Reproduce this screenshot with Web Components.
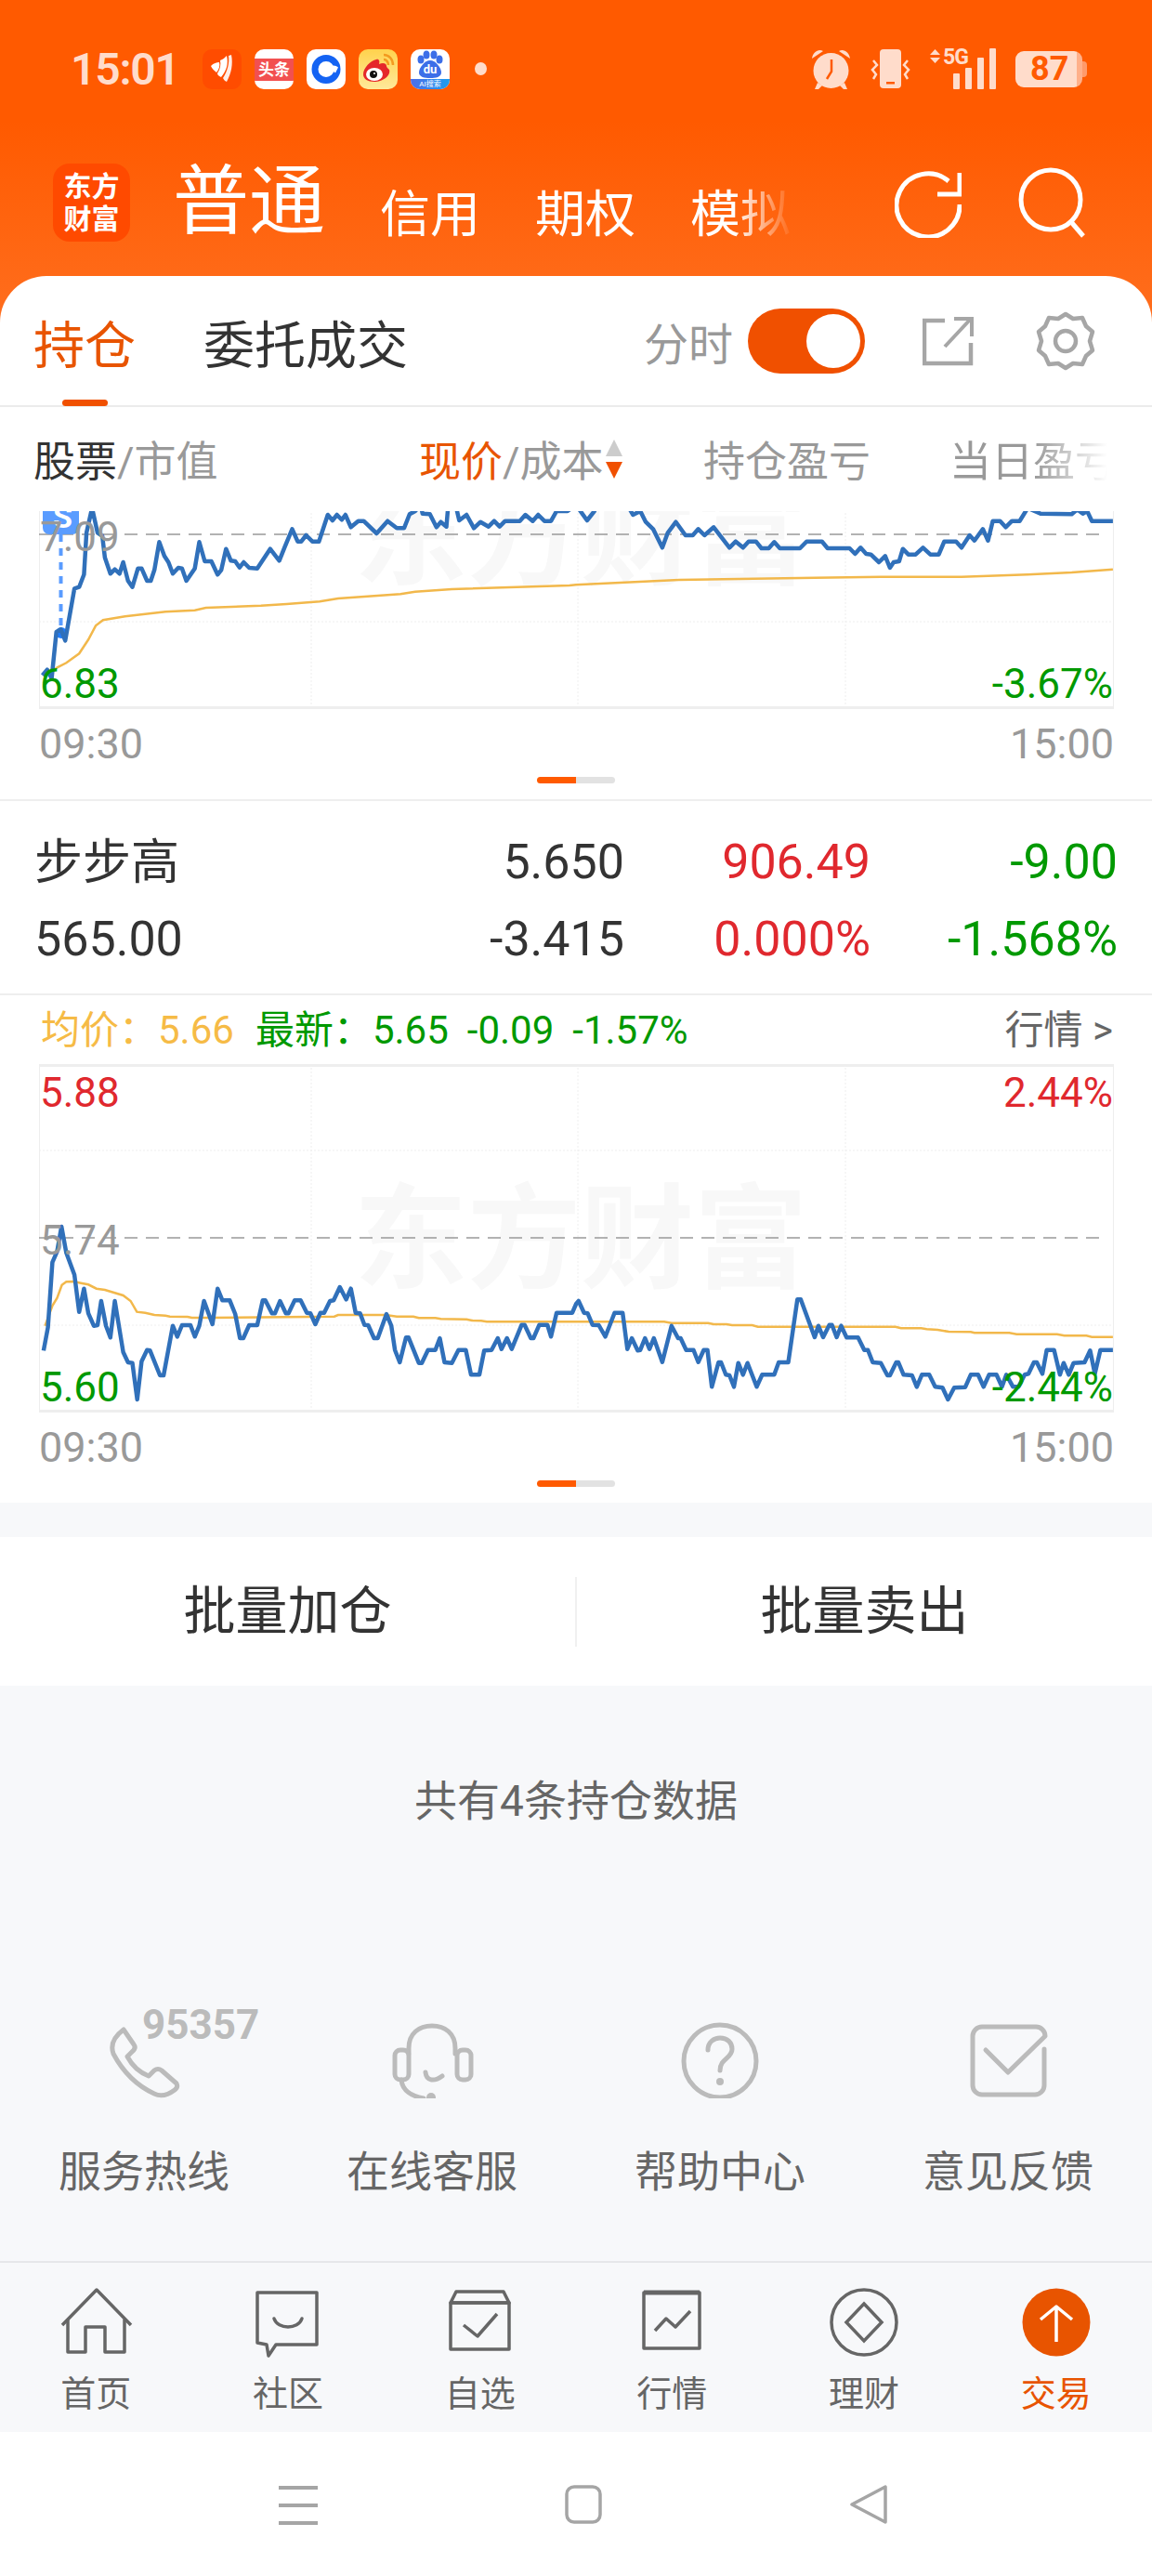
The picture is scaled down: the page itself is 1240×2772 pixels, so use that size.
<!DOCTYPE html>
<html lang="zh">
<head>
<meta charset="utf-8">
<title>持仓</title>
<style>
   html, body { margin: 0; padding: 0; background: #fff; }
   body { width: 1240px; height: 2772px; overflow: hidden; font-family: Roboto, "Noto Sans CJK SC", sans-serif; }
</style>
</head>
<body>
<app-header>
   <svg slot="apps" width="42" height="43" viewBox="0 0 42 43"><rect width="42" height="43" rx="10" fill="#ff4c00"/><path d="M9 18c3-3 6-4 9-4 1 4 0 7-3 11-2-2-5-4-6-7z" fill="#fff"/><path d="M19 12c3-1 5-3 7-5 2 8 0 16-6 23-3-1-4-3-4-4 3-5 4-9 3-14z" fill="#fff"/><path d="M28 7l3-1c2 10 0 20-5 29-2-1-3-2-4-4 5-8 7-16 6-24z" fill="#fff" opacity=".9"/></svg>
   <status-toutiao slot="apps"></status-toutiao>
   <svg slot="apps" width="42" height="43" viewBox="0 0 42 43"><rect width="42" height="43" rx="10" fill="#fff"/><circle cx="21" cy="21.500" r="12" fill="none" stroke="#1463f3" stroke-width="7"/><path d="M21 21.500c4-5 10-5 13-2l-3 6c-3-3-7-2-10-4z" fill="#fff"/></svg>
   <svg slot="apps" width="42" height="43" viewBox="0 0 42 43"><defs><linearGradient id="wb" x1="0" y1="0" x2="0" y2="1"><stop offset="0" stop-color="#ffd24d"/><stop offset="1" stop-color="#ffe99a"/></linearGradient></defs><rect width="42" height="43" rx="10" fill="url(#wb)"/><path d="M5 27c0-7 8-15 14-16 3-1 4 2 3 5 4-2 8-1 8 2 0 1 1 2 3 4 2 7-8 13-16 13-7 0-12-3-12-8z" fill="#e5262a"/><ellipse cx="17" cy="27" rx="9" ry="7" fill="#fff"/><circle cx="16" cy="27" r="4" fill="#111"/><circle cx="17" cy="26" r="1" fill="#fff"/><path d="M27 6c6 0 10 5 10 11M27 11c3 0 5 3 5 6" fill="none" stroke="#f39a1f" stroke-width="2.500"/></svg>
   <status-baidu slot="apps"></status-baidu>
</app-header>

<main-sheet>
   <trade-tabs></trade-tabs>
   <col-header></col-header>

   <stock-chart set="a" clip="162" left="7.09" low="6.83" lowright="-3.67%"></stock-chart>
   <time-axis></time-axis>

   <position-row name="步步高" price="5.650" profit="906.49" day="-9.00" value="565.00" cost="-3.415" ratio="0.000%" dayratio="-1.568%"></position-row>
   <quote-info></quote-info>

   <stock-chart set="b" clip="0" top="5.88" topright="2.44%" left="5.74" low="5.60" lowright="-2.44%"></stock-chart>
   <time-axis></time-axis>
</main-sheet>

<batch-actions></batch-actions>

<service-panel>
   <service-item label="服务热线">
      <svg width="110" height="90" viewBox="0 0 110 90" fill="none" stroke="#bbb" stroke-width="5" stroke-linejoin="round"><path d="M33 16L44 32Q47 36 42 40L37 45Q45 60 60 66L66 60Q70 57 74 60L90 74Q92 78 88 81Q76 90 66 85Q38 72 22 42Q17 28 33 16Z"/></svg>
      <span slot="badge">95357</span>
   </service-item>
   <service-item label="在线客服">
      <svg width="110" height="90" viewBox="0 0 110 90" fill="none" stroke="#bbb" stroke-width="5" stroke-linecap="round"><path d="M30 42V36C30 20 41 12 55 12S80 20 80 36V42"/><rect x="15" y="38" width="15" height="32" rx="6"/><rect x="82" y="38" width="15" height="32" rx="6"/><path d="M22 70C23 82 34 88 46 90"/><path d="M48 62C49 72 58 72 66 66"/><circle cx="54" cy="89" r="5" fill="#bbb" stroke="none"/></svg>
   </service-item>
   <service-item label="帮助中心">
      <svg width="110" height="90" viewBox="0 0 110 90" fill="none" stroke="#bbb" stroke-width="5" stroke-linecap="round"><circle cx="55" cy="50" r="39"/><path d="M42 38C42 29 49 25 55 25C63 25 68 30 68 37C68 47 55 47 55 60"/><circle cx="55" cy="72" r="4" fill="#bbb" stroke="none"/></svg>
   </service-item>
   <service-item label="意见反馈">
      <svg width="110" height="90" viewBox="0 0 110 90" fill="none" stroke="#bbb" stroke-width="5" stroke-linecap="round" stroke-linejoin="round"><path d="M94 37V76A10 10 0 0 1 84 86H27A10 10 0 0 1 17 76V23A10 10 0 0 1 27 13H84A10 10 0 0 1 95 23L55 62L31 38"/></svg>
   </service-item>
</service-panel>

<tab-bar>
   <tab-item label="首页">
      <svg width="90" height="80" viewBox="0 0 90 80" fill="none" stroke="#666" stroke-width="3.500" stroke-linejoin="round"><path d="M9 41L46 3L83 41"/><path d="M15 35V70H34V43H55V70H76V35"/></svg>
   </tab-item>
   <tab-item label="社区">
      <svg width="90" height="80" viewBox="0 0 90 80" fill="none" stroke="#666" stroke-width="3.500" stroke-linejoin="round" stroke-linecap="round"><path d="M12 6H76V62H32L24 74L22 62L12 60Z"/><path d="M30 34C34 46 56 46 60 34"/></svg>
   </tab-item>
   <tab-item label="自选">
      <svg width="90" height="80" viewBox="0 0 90 80" fill="none" stroke="#666" stroke-width="3.500" stroke-linejoin="round"><path d="M13 17L19 5H70L76 17Z"/><rect x="13" y="17" width="63" height="50"/><path d="M27 41L42 53L63 29"/></svg>
   </tab-item>
   <tab-item label="行情">
      <svg width="90" height="80" viewBox="0 0 90 80" fill="none" stroke="#666" stroke-width="3.500" stroke-linejoin="round"><rect x="15" y="6" width="60" height="60"/><path d="M15 6H75" stroke-width="5"/><path d="M27 47L39 34L49 43L65 26"/></svg>
   </tab-item>
   <tab-item label="理财">
      <svg width="90" height="80" viewBox="0 0 90 80" fill="none" stroke="#666" stroke-width="3.500"><circle cx="45" cy="38" r="35"/><path d="M45 18L64 38L45 58L26 38Z"/></svg>
   </tab-item>
   <tab-item label="交易" active>
      <svg width="90" height="80" viewBox="0 0 90 80" fill="none" stroke="#fff" stroke-width="3.500" stroke-linejoin="round"><circle cx="45" cy="38" r="36.500" fill="#e85400" stroke="none"/><path d="M45 21V59M28 35L45 21L62 35"/></svg>
   </tab-item>
</tab-bar>

<android-nav></android-nav>

<script>
const CJK = 'Roboto, "Noto Sans CJK SC", sans-serif';

// raw samples read off the screenshot, as [x, y] in crop space
const SHAPES = {
   a: {
      blueLeft: [[65,590],[78,572],[90,600],[103,450],[115,442],[127,478],[152,310],[165,305],[178,265],[185,130],[200,50],[215,130],[228,140],[235,210],[250,262],[262,248],[275,262],[285,225],[298,285],[310,305],[325,245],[335,245],[350,285],[360,285],[370,250],[383,160],[397,205],[408,225],[420,262],[435,243],[445,245],[457,285],[480,245],[492,160],[507,222],[525,222],[542,265],[552,250],[565,182],[578,220],[590,222],[602,242],[613,225],[628,243],[650,245],[685,182],[710,220],[725,175],[745,118],[760,158],[770,158],[783,138],[800,158],[818,158],[842,72],[855,90],[867,72],[880,88],[890,72],[905,112],[925,92],[940,92],[975,132],[1005,92],[1030,115],[1050,115],[1065,70],[1080,60],[1095,40],[1100,68],[1120,70],[1138,112],[1150,95],[1165,110],[1170,40],[1190,40],[1200,90],[1220,72],[1240,115],[1258,95],[1280,110],[1295,92],[1310,110],[1325,92],[1365,92],[1380,72],[1400,92],[1415,72],[1432,92],[1450,92],[1465,60],[1495,60],[1518,40]],
      blueRight: [[30,90],[50,60],[60,30],[135,30],[155,72],[175,60],[190,95],[210,118],[235,178],[250,130],[272,95],[298,138],[318,138],[333,118],[350,138],[375,112],[418,178],[435,158],[455,178],[470,158],[490,158],[505,180],[525,180],[540,160],[555,180],[610,180],[628,158],[670,158],[685,180],[745,180],[760,198],[775,178],[790,198],[803,200],[825,225],[842,205],[855,243],[865,225],[880,222],[890,182],[905,200],[925,200],[945,178],[965,200],[988,200],[1003,158],[1035,158],[1050,178],[1072,138],[1085,155],[1108,118],[1122,155],[1135,92],[1155,92],[1170,112],[1187,92],[1208,92],[1230,50],[1265,68],[1350,70],[1365,55],[1380,68],[1392,60],[1405,92],[1462,92]],
      goldLeft: [[80,590],[105,565],[130,550],[165,520],[190,475],[210,430],[230,412],[290,400],[400,385],[480,380],[510,372],[660,365],[730,360],[820,352],[870,342],[1040,328],[1080,320],[1180,312],[1500,300]],
      goldRight: [[0,298],[280,282],[650,275],[830,272],[1050,272],[1230,265],[1350,258],[1462,248]],
      baseY: 530
   },
   b: {
      blueLeft: [[68,580],[80,505],[92,295],[105,260],[117,180],[130,265],[152,335],[165,455],[178,380],[190,460],[205,500],[215,498],[225,420],[238,500],[250,538],[262,420],[285,585],[298,618],[310,620],[323,738],[335,615],[350,578],[358,580],[385,660],[395,660],[420,500],[432,535],[445,498],[468,498],[480,535],[492,500],[505,420],[528,495],[542,380],[555,418],[575,418],[590,462],[603,540],[612,540],[628,498],[650,498],[665,418],[672,418],[690,460],[698,460],[712,420],[728,460],[735,460],[752,418],[768,418],[785,458],[795,460],[808,495],[822,458],[832,458],[848,420],[858,418],[875,375],[892,415],[905,380],[918,458],[930,460],[942,497],[952,498],[968,540],[978,540],[1002,462],[1015,500],[1025,578],[1038,618],[1055,538],[1062,538],[1090,620],[1098,620],[1115,578],[1135,578],[1147,540],[1160,618],[1180,620],[1198,578],[1218,578],[1232,658],[1255,658],[1268,580],[1288,578],[1305,540],[1315,575],[1330,540],[1343,575],[1370,497],[1378,497],[1395,540],[1402,540],[1418,497],[1440,497],[1450,535],[1465,458],[1508,458],[1518,430]],
      blueRight: [[7,420],[22,458],[32,460],[45,497],[62,498],[80,535],[105,458],[127,458],[140,575],[152,540],[168,580],[175,578],[188,540],[200,575],[212,540],[235,617],[260,500],[278,540],[285,540],[300,578],[320,578],[333,617],[348,578],[358,578],[370,697],[388,618],[395,618],[408,658],[418,660],[430,697],[442,620],[455,658],[467,620],[492,697],[507,658],[540,658],[552,618],[578,618],[603,415],[612,415],[650,537],[660,500],[673,537],[690,497],[697,497],[710,537],[722,500],[737,538],[768,538],[785,578],[795,578],[808,618],[830,620],[848,660],[855,660],[872,618],[878,618],[892,658],[915,660],[928,697],[942,658],[962,658],[978,697],[998,700],[1013,738],[1030,700],[1060,698],[1075,658],[1095,658],[1110,697],[1125,658],[1145,658],[1160,697],[1172,658],[1190,697],[1205,697],[1222,658],[1232,655],[1247,618],[1255,618],[1270,655],[1282,578],[1302,578],[1318,658],[1328,620],[1342,658],[1355,620],[1385,618],[1400,580],[1413,655],[1428,578],[1462,578]],
      goldLeft: [[72,500],[92,435],[105,410],[118,368],[130,358],[150,357],[170,362],[190,367],[212,380],[235,384],[285,402],[305,420],[322,455],[345,458],[370,465],[400,467],[412,470],[460,471],[472,474],[520,474],[860,470],[870,465],[1000,465],[1030,470],[1075,470],[1090,475],[1135,475],[1150,478],[1220,479],[1235,483],[1260,484],[1275,487],[1518,487]],
      goldRight: [[0,487],[240,487],[260,491],[360,491],[375,495],[410,495],[425,498],[480,498],[495,503],[870,503],[885,508],[940,508],[955,511],[985,513],[1015,519],[1075,520],[1085,523],[1180,523],[1200,527],[1310,527],[1330,532],[1390,532],[1405,536],[1462,536]],
      baseY: 1260
   }
};

// chart box sits at page x 42; a full plot is 375 tall
function toPoints(set, leftKey, rightKey, plotTop) {
   const s = SHAPES[set];
   const conv = (list, baseX) => list.map(([x, y]) =>
      (baseX + x / 2.53 - 42).toFixed(1) + ',' + (s.baseY + y / 3 - plotTop).toFixed(1));
   return conv(s[leftKey], 20).concat(conv(s[rightKey], 620)).join(' ');
}

class AppHeader extends HTMLElement {
   constructor() {
      super();
      this.attachShadow({mode: 'open'});
   }
   connectedCallback() {
      this.shadowRoot.innerHTML = `
         <style>
            :host { display: block; height: 347px; background: linear-gradient(#ff5a00 0, #ff5a00 130px, #ff6e1e 347px); font-family: ${CJK}; color: #fff; }
            .status { height: 150px; display: flex; align-items: center; padding: 0 70px 2px 76px; box-sizing: border-box; color: #ffdccb; }
            .time { width: 142px; font-size: 48px; font-weight: 600; letter-spacing: -1.200px; }
            .apps { display: flex; gap: 14px; align-items: center; }
            .apps ::slotted(*) { display: block; }
            .dot { width: 13px; height: 14px; border-radius: 50%; background: #ffdccb; margin-left: 27px; }
            .sys { margin-left: auto; display: flex; gap: 21px; align-items: center; }
            .sys svg { display: block; }
            .net { position: relative; width: 71px; height: 44px; }
            .net span { position: absolute; left: 14px; top: -3px; font-size: 23px; font-weight: 700; line-height: 26px; letter-spacing: -1px; }
            .bat { display: flex; align-items: center; }
            .cell { width: 72px; height: 39px; border-radius: 9px; box-sizing: border-box; background: linear-gradient(90deg, #ffdccb 92%, #ffb08a 92%); color: #ff5a00; font-size: 36px; font-weight: 700; line-height: 39px; padding-left: 16px; }
            .tip { width: 5px; height: 17px; background: #ff9a6a; border-radius: 0 4px 4px 0; }
            .nav { display: flex; align-items: flex-start; padding: 26px 72px 0 57px; }
            .logo { width: 83px; height: 84px; border-radius: 18px; background: #ff4a00; font-size: 30px; font-weight: 700; line-height: 35px; text-align: center; padding-top: 7px; box-sizing: border-box; flex: none; }
            .strip { margin-left: 46px; width: 668px; display: flex; align-items: flex-end; gap: 59px; white-space: nowrap; -webkit-mask-image: linear-gradient(90deg, #000 604px, transparent 668px); mask-image: linear-gradient(90deg, #000 604px, transparent 668px); margin-top: -15px; }
            .strip b { font-weight: 400; font-size: 82px; line-height: 112px; }
            .strip span { font-size: 54px; line-height: 82px; }
            .tools { margin-left: auto; margin-top: 4px; display: flex; gap: 61px; }
            .tools svg { display: block; }
         </style>
         <div class="status">
            <div class="time">15:01</div>
            <div class="apps"><slot name="apps"></slot></div>
            <div class="dot"></div>
            <div class="sys">
               <svg width="43" height="44" viewBox="0 0 43 44" fill="#ffdccb"><circle cx="21.500" cy="24" r="19"/><path d="M1 11C2 4 8 0 13 3ZM42 11C41 4 35 0 30 3ZM7 37L4 44H8L12 40ZM36 37L39 44H35L31 40Z"/><path d="M22 12V25L17 33" fill="none" stroke="#ff5a00" stroke-width="2.500"/></svg>
               <svg width="43" height="42" viewBox="0 0 43 42" fill="#ffdccb"><rect x="10" y="0" width="23" height="42" rx="4"/><rect x="17" y="35" width="9" height="2.500" fill="#ff5a00"/><path d="M3 12L7 17L2 22L6 27L3 32M40 12L36 17L41 22L37 27L40 32" fill="none" stroke="#ffdccb" stroke-width="2.500"/></svg>
               <div class="net">
                  <svg width="71" height="44" viewBox="0 0 71 44" fill="#ffdccb"><path d="M5.500 1L0 7H11ZM0 10H11L5.500 16Z"/><rect x="25" y="27" width="7" height="17" rx="1"/><rect x="38" y="21" width="7" height="23" rx="1"/><rect x="51" y="10" width="7" height="34" rx="1"/><rect x="64" y="0" width="7" height="44" rx="1"/></svg>
                  <span>5G</span>
               </div>
               <div class="bat"><div class="cell">87</div><div class="tip"></div></div>
            </div>
         </div>
         <div class="nav">
            <div class="logo">东方<br>财富</div>
            <div class="strip"><b>普通</b><span>信用</span><span>期权</span><span>模拟</span></div>
            <div class="tools">
               <svg width="72" height="76" viewBox="0 0 72 76" fill="none" stroke="#fff" stroke-width="5"><path d="M58 15A34 34 0 1 0 70 40"/><path d="M70 6V29H46"/></svg>
               <svg width="72" height="76" viewBox="0 0 72 76" fill="none" stroke="#fff" stroke-width="5"><circle cx="35" cy="35" r="32"/><path d="M58 60L70 74"/></svg>
            </div>
         </div>
      `;
   }
}
customElements.define('app-header', AppHeader);

class StatusToutiao extends HTMLElement {
   constructor() {
      super();
      this.attachShadow({mode: 'open'});
   }
   connectedCallback() {
      this.shadowRoot.innerHTML = `
         <style>
            :host { display: block; width: 42px; height: 43px; background: #fff; border-radius: 10px; overflow: hidden; font-family: ${CJK}; }
            div { margin-top: 10px; height: 24px; background: #f25050; color: #fff; font-size: 17px; font-weight: 700; line-height: 24px; text-align: center; white-space: nowrap; }
         </style>
         <div>头条</div>
      `;
   }
}
customElements.define('status-toutiao', StatusToutiao);

class StatusBaidu extends HTMLElement {
   constructor() {
      super();
      this.attachShadow({mode: 'open'});
   }
   connectedCallback() {
      this.shadowRoot.innerHTML = `
         <style>
            :host { display: block; position: relative; width: 42px; height: 43px; background: #fff; border-radius: 10px; overflow: hidden; font-family: ${CJK}; }
            svg { display: block; }
            .du { position: absolute; left: 0; right: 0; top: 14px; text-align: center; font-size: 13px; font-weight: 700; color: #fff; line-height: 15px; }
            .band { position: absolute; left: 0; right: 0; bottom: 0; height: 11px; background: linear-gradient(90deg, #4f6de8, #1b9df0); color: #fff; font-size: 8px; line-height: 11px; text-align: center; white-space: nowrap; }
         </style>
         <svg width="42" height="43" viewBox="0 0 42 43" fill="#3c6ee8"><ellipse cx="11" cy="11" rx="3.500" ry="4.500"/><ellipse cx="17" cy="6" rx="3.500" ry="4.500"/><ellipse cx="25" cy="6" rx="3.500" ry="4.500"/><ellipse cx="31" cy="11" rx="3.500" ry="4.500"/><path d="M21 12C27 12 33 20 33 25C33 30 27 31 21 31S9 30 9 25C9 20 15 12 21 12Z"/></svg>
         <div class="du">du</div>
         <div class="band">AI搜索</div>
      `;
   }
}
customElements.define('status-baidu', StatusBaidu);

class MainSheet extends HTMLElement {
   constructor() {
      super();
      this.attachShadow({mode: 'open'});
   }
   connectedCallback() {
      this.shadowRoot.innerHTML = `
         <style>
            :host { display: block; position: relative; margin-top: -50px; height: 1320px; background: #fff; border-radius: 50px 50px 0 0; overflow: hidden; font-family: ${CJK}; }
         </style>
         <slot></slot>
      `;
   }
}
customElements.define('main-sheet', MainSheet);

class TradeTabs extends HTMLElement {
   constructor() {
      super();
      this.attachShadow({mode: 'open'});
   }
   connectedCallback() {
      this.shadowRoot.innerHTML = `
         <style>
            :host { display: flex; position: relative; align-items: center; height: 141px; box-sizing: border-box; border-bottom: 2px solid #ebebeb; padding: 0 61px 0 36px; font-size: 55px; color: #333; }
            .on { color: #e85400; }
            .two { margin-left: 73px; }
            .bar { position: absolute; left: 67px; bottom: -1px; width: 49px; height: 7px; border-radius: 4px; background: #f05000; }
            .right { margin-left: auto; display: flex; align-items: center; }
            .lbl { font-size: 48px; color: #999; }
            .sw { margin-left: 16px; width: 126px; height: 70px; border-radius: 35px; background: #f05000; position: relative; }
            .sw i { position: absolute; right: 5px; top: 6px; width: 58px; height: 58px; border-radius: 50%; background: #fff; }
            svg { display: block; }
            .share { margin-left: 62px; }
            .gear { margin-left: 66px; }
         </style>
         <span class="on">持仓</span>
         <span class="two">委托成交</span>
         <div class="bar"></div>
         <div class="right">
            <span class="lbl">分时</span>
            <div class="sw"><i></i></div>
            <svg class="share" width="56" height="56" viewBox="0 0 56 56" fill="none" stroke="#a6a6a6" stroke-width="4.500"><path d="M24 6H2V52H52V30"/><path d="M24 34L52 4M34 4H53V23" stroke-width="4"/></svg>
            <svg class="gear" width="64" height="64" viewBox="0 0 64 64" fill="none" stroke="#a6a6a6" stroke-width="4.500" stroke-linejoin="round"><path d="M32 3L40 8L50 7L54 16L61 22L58 32L61 42L54 48L50 57L40 56L32 61L24 56L14 57L10 48L3 42L6 32L3 22L10 16L14 7L24 8Z"/><circle cx="32" cy="32" r="11"/></svg>
         </div>
      `;
   }
}
customElements.define('trade-tabs', TradeTabs);

class ColHeader extends HTMLElement {
   constructor() {
      super();
      this.attachShadow({mode: 'open'});
   }
   connectedCallback() {
      this.shadowRoot.innerHTML = `
         <style>
            :host { display: grid; grid-template-columns: 415px 306px 265px 1fr; align-items: center; height: 112px; padding: 0 0 1px 36px; box-sizing: border-box; font-size: 45px; color: #999; white-space: nowrap; }
            .dark { color: #333; }
            .hot { color: #e85400; }
            .sort { display: inline-flex; align-items: center; }
            .sort svg { display: block; margin-left: 1px; }
            .last { -webkit-mask-image: linear-gradient(90deg, #000 90px, transparent 170px); mask-image: linear-gradient(90deg, #000 90px, transparent 170px); }
         </style>
         <span><span class="dark">股票</span>/市值</span>
         <span class="sort"><span class="hot">现价</span>/成本<svg width="20" height="44" viewBox="0 0 20 44"><path d="M10 1L19 19H1Z" fill="#ccc"/><path d="M1 25H19L10 43Z" fill="#f05000"/></svg></span>
         <span>持仓盈亏</span>
         <span class="last">当日盈亏</span>
      `;
   }
}
customElements.define('col-header', ColHeader);

class StockChart extends HTMLElement {
   constructor() {
      super();
      this.attachShadow({mode: 'open'});
   }
   connectedCallback() {
      const clip = parseInt(this.getAttribute('clip') || '0', 10);
      const set = this.getAttribute('set');
      const plotTop = set === 'a' ? 388 : 1145;
      const blue = toPoints(set, 'blueLeft', 'blueRight', plotTop);
      const gold = toPoints(set, 'goldLeft', 'goldRight', plotTop);
      const label = (k) => this.getAttribute(k) || '';
      const marker = set === 'a' ? `
         <path d="M23.500 187V285" stroke="#5a9cff" stroke-width="4" stroke-dasharray="8 7"/>
         <circle cx="24" cy="293" r="6" fill="#1f7dff"/>
         <rect x="4" y="150" width="39" height="37" rx="7" fill="#5a9cff"/>` : '';
      this.shadowRoot.innerHTML = `
         <style>
            :host { display: block; margin: 0 41px 0 42px; height: ${375 - clip}px; overflow: hidden; }
            .plot { position: relative; width: 1157px; height: 375px; margin-top: ${-clip}px; box-sizing: border-box; border: 1px solid #eee; border-top-width: 3px; border-bottom-width: 3px; }
            .mark { position: absolute; left: 338px; top: 112px; font-family: ${CJK}; font-size: 122px; font-weight: 700; line-height: 150px; color: #f8f8f8; white-space: nowrap; }
            svg { position: absolute; left: -1px; top: -3px; }
            .s { position: absolute; left: 14px; top: ${150 - 3}px; font-size: 34px; font-weight: 700; color: #fff; line-height: 37px; }
            .labels { position: absolute; left: 0; right: 0; top: -3px; height: 375px; box-sizing: border-box; padding: 6px 0 2px; display: grid; grid-template-columns: 1fr 1fr; grid-template-rows: 50px 50px 50px; align-content: space-between; font-size: 44px; line-height: 50px; font-family: ${CJK}; }
            .labels .r { text-align: right; }
            .up { color: #e0282e; }
            .mid { color: #999; }
            .dn { color: #009900; }
         </style>
         <div class="plot">
            <div class="mark">东方财富</div>
            <svg width="1157" height="375" viewBox="0 0 1157 375" fill="none">
               <g stroke="#eee" stroke-width="1" stroke-dasharray="2 2">
                  <path d="M293 0V375M580 0V375M868 0V375M0 93H1157M0 281H1157"/>
               </g>
               <path d="M0 187H1150" stroke="#999" stroke-width="1.500" stroke-dasharray="14 9"/>
               ${marker}
               <polyline points="${gold}" stroke="#f2b84b" stroke-width="2.500"/>
               <polyline points="${blue}" stroke="#3070ba" stroke-width="4.500" stroke-linejoin="round"/>
            </svg>
            ${set === 'a' ? '<div class="s">S</div>' : ''}
            <div class="labels">
               <span class="up">${label('top')}</span><span class="up r">${label('topright')}</span>
               <span class="mid">${label('left')}</span><span></span>
               <span class="dn">${label('low')}</span><span class="dn r">${label('lowright')}</span>
            </div>
         </div>
      `;
   }
}
customElements.define('stock-chart', StockChart);

class TimeAxis extends HTMLElement {
   constructor() {
      super();
      this.attachShadow({mode: 'open'});
   }
   connectedCallback() {
      this.shadowRoot.innerHTML = `
         <style>
            :host { display: block; height: 97px; padding: 0 41px 0 42px; box-sizing: border-box; color: #999; font-size: 45px; }
            .row { display: flex; justify-content: space-between; height: 73px; line-height: 76px; }
            .pager { display: flex; justify-content: center; margin: 0 -41px 0 -42px; }
            .pager i { width: 42px; height: 7px; background: #e2e2e2; border-radius: 0 4px 4px 0; }
            .pager i:first-child { background: #ff5a00; border-radius: 4px 0 0 4px; }
         </style>
         <div class="row"><span>09:30</span><span>15:00</span></div>
         <div class="pager"><i></i><i></i></div>
      `;
   }
}
customElements.define('time-axis', TimeAxis);

class PositionRow extends HTMLElement {
   constructor() {
      super();
      this.attachShadow({mode: 'open'});
   }
   connectedCallback() {
      const a = (k) => this.getAttribute(k);
      this.shadowRoot.innerHTML = `
         <style>
            :host { display: grid; grid-template-columns: 260px 375px 265px 266px; grid-auto-rows: 83px; align-items: center; height: 211px; box-sizing: border-box; padding: 24px 0 21px 37px; border-top: 2px solid #eee; border-bottom: 2px solid #eee; font-size: 52px; color: #333; white-space: nowrap; }
            span { text-align: right; }
            .l { text-align: left; }
            .name { padding-bottom: 8px; }
            .up { color: #e0282e; }
            .dn { color: #009900; }
         </style>
         <span class="l name">${a('name')}</span><span>${a('price')}</span><span class="up">${a('profit')}</span><span class="dn">${a('day')}</span>
         <span class="l">${a('value')}</span><span>${a('cost')}</span><span class="up">${a('ratio')}</span><span class="dn">${a('dayratio')}</span>
      `;
   }
}
customElements.define('position-row', PositionRow);

class QuoteInfo extends HTMLElement {
   constructor() {
      super();
      this.attachShadow({mode: 'open'});
   }
   connectedCallback() {
      this.shadowRoot.innerHTML = `
         <style>
            :host { display: flex; align-items: baseline; height: 74px; line-height: 76px; padding: 0 42px 0 44px; box-sizing: border-box; font-size: 42px; white-space: nowrap; }
            .avg { color: #f6bb46; display: flex; align-items: baseline; }
            .now { color: #009900; display: flex; align-items: baseline; gap: 20px; margin-left: 23px; }
            .key { margin-right: -20px; }
            .more { margin-left: auto; color: #666; }
         </style>
         <span class="avg"><span>均价：</span><span>5.66</span></span>
         <span class="now"><span class="key">最新：</span><span>5.65</span><span>-0.09</span><span>-1.57%</span></span>
         <span class="more">行情 &gt;</span>
      `;
   }
}
customElements.define('quote-info', QuoteInfo);

class BatchActions extends HTMLElement {
   constructor() {
      super();
      this.attachShadow({mode: 'open'});
   }
   connectedCallback() {
      this.shadowRoot.innerHTML = `
         <style>
            :host { display: flex; align-items: center; height: 197px; box-sizing: border-box; border-top: 37px solid #f7f8fa; background: #fff; font-size: 56px; color: #333; font-family: ${CJK}; }
            span { flex: 1; text-align: center; line-height: 75px; }
            span + span { border-left: 2px solid #f0f0f0; }
         </style>
         <span>批量加仓</span><span>批量卖出</span>
      `;
   }
}
customElements.define('batch-actions', BatchActions);

class ServicePanel extends HTMLElement {
   constructor() {
      super();
      this.attachShadow({mode: 'open'});
   }
   connectedCallback() {
      this.shadowRoot.innerHTML = `
         <style>
            :host { display: block; height: 621px; box-sizing: border-box; background: #f7f8fa; border-bottom: 2px solid #e6e7ea; font-family: ${CJK}; }
            .note { padding-top: 90px; height: 354px; box-sizing: border-box; text-align: center; font-size: 46px; line-height: 68px; color: #666; }
            .grid { display: grid; grid-template-columns: repeat(4, 1fr); }
         </style>
         <div class="note">共有4条持仓数据</div>
         <div class="grid"><slot></slot></div>
      `;
   }
}
customElements.define('service-panel', ServicePanel);

class ServiceItem extends HTMLElement {
   constructor() {
      super();
      this.attachShadow({mode: 'open'});
   }
   connectedCallback() {
      this.shadowRoot.innerHTML = `
         <style>
            :host { display: flex; flex-direction: column; align-items: center; font-size: 46px; color: #666; }
            .icon { position: relative; width: 110px; height: 92px; }
            .icon ::slotted(svg) { display: block; }
            .icon ::slotted([slot=badge]) { position: absolute; left: 53px; top: -15px; font-size: 44px; font-weight: 700; color: #bbb; line-height: 52px; font-family: Roboto, sans-serif; }
            .label { margin-top: 43px; line-height: 68px; }
         </style>
         <div class="icon"><slot></slot><slot name="badge"></slot></div>
         <div class="label">${this.getAttribute('label')}</div>
      `;
   }
}
customElements.define('service-item', ServiceItem);

class TabBar extends HTMLElement {
   constructor() {
      super();
      this.attachShadow({mode: 'open'});
   }
   connectedCallback() {
      this.shadowRoot.innerHTML = `
         <style>
            :host { display: grid; grid-template-columns: repeat(6, 1fr); height: 182px; padding-top: 26px; box-sizing: border-box; background: #f7f8fa; font-family: ${CJK}; }
         </style>
         <slot></slot>
      `;
   }
}
customElements.define('tab-bar', TabBar);

class TabItem extends HTMLElement {
   constructor() {
      super();
      this.attachShadow({mode: 'open'});
   }
   connectedCallback() {
      const color = this.hasAttribute('active') ? '#e85400' : '#666';
      this.shadowRoot.innerHTML = `
         <style>
            :host { display: flex; flex-direction: column; align-items: center; font-size: 38px; color: ${color}; }
            ::slotted(svg) { display: block; }
            .label { margin-top: 9px; line-height: 52px; }
         </style>
         <slot></slot>
         <div class="label">${this.getAttribute('label')}</div>
      `;
   }
}
customElements.define('tab-item', TabItem);

class AndroidNav extends HTMLElement {
   constructor() {
      super();
      this.attachShadow({mode: 'open'});
   }
   connectedCallback() {
      this.shadowRoot.innerHTML = `
         <style>
            :host { display: flex; justify-content: center; gap: 266px; height: 155px; padding: 57px 0 0 16px; box-sizing: border-box; background: #fff; }
            svg { display: block; }
         </style>
         <svg width="42" height="44" viewBox="0 0 42 44" fill="#a5a5a5"><rect y="1" width="42" height="4"/><rect y="20" width="42" height="4"/><rect y="39" width="42" height="4"/></svg>
         <svg width="40" height="42" viewBox="0 0 40 42" fill="none" stroke="#a5a5a5" stroke-width="3.500"><rect x="2" y="2" width="36" height="38" rx="8"/></svg>
         <svg width="42" height="42" viewBox="0 0 42 42" fill="none" stroke="#a5a5a5" stroke-width="3.500" stroke-linejoin="round"><path d="M39 2V40L3 21Z"/></svg>
      `;
   }
}
customElements.define('android-nav', AndroidNav);
</script>
</body>
</html>
